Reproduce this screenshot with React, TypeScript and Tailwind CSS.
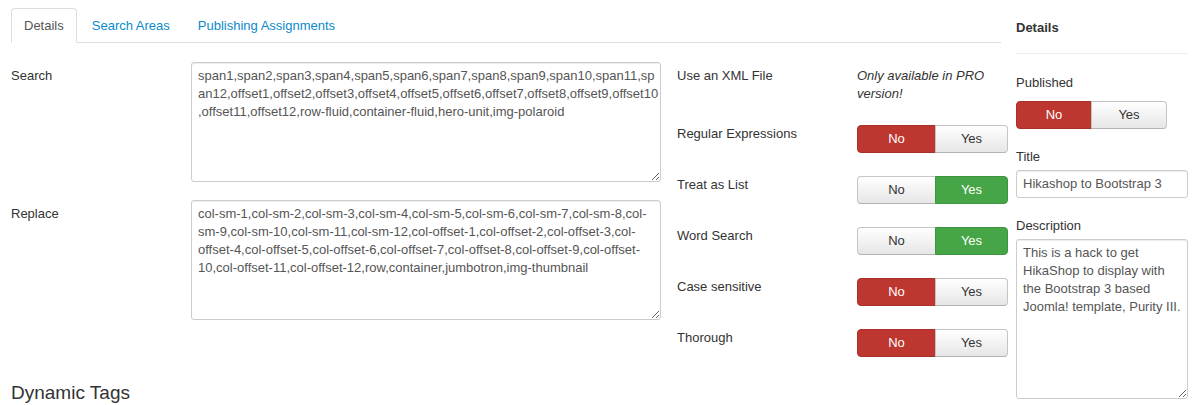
import React from "react";

const searchText =
  "span1,span2,span3,span4,span5,span6,span7,span8,span9,span10,span11,sp\nan12,offset1,offset2,offset3,offset4,offset5,offset6,offset7,offset8,offset9,offset10\n,offset11,offset12,row-fluid,container-fluid,hero-unit,img-polaroid";

const replaceText =
  "col-sm-1,col-sm-2,col-sm-3,col-sm-4,col-sm-5,col-sm-6,col-sm-7,col-sm-8,col-\nsm-9,col-sm-10,col-sm-11,col-sm-12,col-offset-1,col-offset-2,col-offset-3,col-\noffset-4,col-offset-5,col-offset-6,col-offset-7,col-offset-8,col-offset-9,col-offset-\n10,col-offset-11,col-offset-12,row,container,jumbotron,img-thumbnail";

const descText =
  "This is a hack to get HikaShop to display with the Bootstrap 3 based Joomla! template, Purity III.";

type Val = "no" | "yes";

function YesNo({ value, wide = false }: { value: Val; wide?: boolean }) {
  const inactive =
    "bg-gradient-to-b from-white to-[#e6e6e6] border-[#c5c5c5] border-b-[#b3b3b3] text-[#333]";
  const noCls = value === "no" ? "bg-[#bd362f] border-[#a9302a] text-white" : inactive;
  const yesCls = value === "yes" ? "bg-[#46a546] border-[#3f943f] text-white" : inactive;
  return (
    <div className="flex h-[28px] text-[13px] leading-[18px]">
      <div
        className={`flex items-center justify-center rounded-l-[4px] border ${noCls} ${
          wide ? "w-[76px]" : "w-[79px]"
        }`}
      >
        No
      </div>
      <div
        className={`-ml-px flex items-center justify-center rounded-r-[4px] border ${yesCls} ${
          wide ? "w-[76px]" : "w-[73px]"
        }`}
      >
        Yes
      </div>
    </div>
  );
}

function Tabs() {
  const tabs = ["Details", "Search Areas", "Publishing Assignments"];
  return (
    <ul className="flex border-b border-[#ddd]">
      {tabs.map((t, i) => (
        <li key={t} className="-mb-px mr-[2px]">
          <span
            className={
              i === 0
                ? "block rounded-t-[4px] border border-[#ddd] border-b-white bg-white px-[12px] pb-[7px] pt-[8px] leading-[18px] text-[#555]"
                : "block border border-transparent px-[12px] pb-[7px] pt-[8px] leading-[18px] text-[#0a8acb]"
            }
          >
            {t}
          </span>
        </li>
      ))}
    </ul>
  );
}

function TextField({ value }: { value: string }) {
  return (
    <textarea
      readOnly
      wrap="off"
      value={value}
      className="h-[120px] w-[470px] overflow-hidden rounded-[3px] border border-[#ccc] px-[6px] py-[4px] text-[13px] leading-[18px] text-[#555] shadow-[inset_0_1px_1px_rgba(0,0,0,0.075)] outline-none"
    />
  );
}

const toggles: { label: string; value: Val }[] = [
  { label: "Regular Expressions", value: "no" },
  { label: "Treat as List", value: "yes" },
  { label: "Word Search", value: "yes" },
  { label: "Case sensitive", value: "no" },
  { label: "Thorough", value: "no" },
];

export default function App() {
  return (
    <div
      className="flex h-[405px] w-[1197px] items-start overflow-hidden bg-white pl-[11px] text-[13px] leading-[18px] text-[#333]"
      style={{ fontFamily: '"Liberation Sans", Arial, sans-serif' }}
    >
      {/* main area */}
      <div className="w-[990px] shrink-0 pt-[8px]">
        <Tabs />

        <div className="mt-[19px] flex items-start">
          {/* search / replace */}
          <div className="w-[650px] shrink-0">
            <div className="mb-[18px] flex">
              <label className="w-[180px] shrink-0 pt-[5px]">Search</label>
              <TextField value={searchText} />
            </div>
            <div className="flex">
              <label className="w-[180px] shrink-0 pt-[5px]">Replace</label>
              <TextField value={replaceText} />
            </div>
          </div>

          {/* options */}
          <div className="ml-[16px] w-[332px] shrink-0 pt-[5px]">
            <div className="mb-[22px] flex">
              <label className="w-[180px] shrink-0">Use an XML File</label>
              <div className="italic">
                Only available in PRO
                <br />
                version!
              </div>
            </div>
            {toggles.map((t) => (
              <div key={t.label} className="mb-[23px] flex">
                <label className="w-[180px] shrink-0">{t.label}</label>
                <YesNo value={t.value} />
              </div>
            ))}
          </div>
        </div>

        <h3 className="mt-[3px] text-[19px] leading-[20px] text-[#333]">Dynamic Tags</h3>
      </div>

      {/* sidebar */}
      <div className="ml-[15px] w-[172px] shrink-0 pt-[19px]">
        <h4 className="font-bold leading-[18px]">Details</h4>
        <hr className="mt-[16px] border-0 border-t border-[#eee]" />
        <label className="mt-[20px] block">Published</label>
        <div className="mt-[9px]">
          <YesNo value="no" wide />
        </div>
        <label className="mt-[19px] block">Title</label>
        <div className="mt-[4px] flex h-[28px] w-[172px] items-center rounded-[3px] border border-[#ccc] px-[6px] text-[#555] shadow-[inset_0_1px_1px_rgba(0,0,0,0.075)]">
          Hikashop to Bootstrap 3
        </div>
        <label className="mt-[19px] block">Description</label>
        <textarea
          readOnly
          value={descText}
          className="mt-[4px] block h-[160px] w-[172px] rounded-[3px] border border-[#ccc] px-[6px] py-[4px] text-[13px] leading-[18px] text-[#555] shadow-[inset_0_1px_1px_rgba(0,0,0,0.075)] outline-none"
        />
      </div>
    </div>
  );
}
